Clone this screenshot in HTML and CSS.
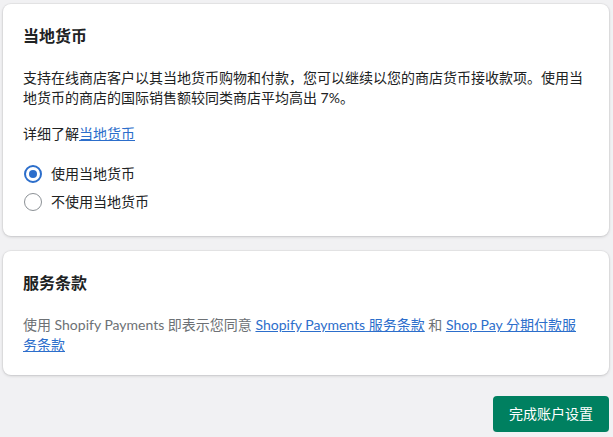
FILE: index.html
```html
<!DOCTYPE html>
<html lang="zh-CN">
  <head>
    <meta charset="UTF-8" />
    <meta name="viewport" content="width=device-width, initial-scale=1.0" />
    <title>账户设置</title>
    <link rel="stylesheet" href="styles.css">
  </head>
  <body>
    <main class="page">
      <section class="card">
        <h2 class="card-title">当地货币</h2>
        <p class="text">支持在线商店客户以其当地货币购物和付款，您可以继续以您的商店货币接收款项。使用当地货币的商店的国际销售额较同类商店平均高出 7%。</p>
        <p class="text more">详细了解<a href="#">当地货币</a></p>
        <div class="choices">
          <label class="choice">
            <input type="radio" name="currency" checked>
            <span class="radio"></span>
            <span>使用当地货币</span>
          </label>
          <label class="choice">
            <input type="radio" name="currency">
            <span class="radio"></span>
            <span>不使用当地货币</span>
          </label>
        </div>
      </section>

      <section class="card">
        <h2 class="card-title">服务条款</h2>
        <p class="text subdued">使用 Shopify Payments 即表示您同意 <a href="#">Shopify Payments 服务条款</a> 和 <a href="#">Shop Pay 分期付款服务条款</a></p>
      </section>

      <div class="actions">
        <button class="primary-btn">完成账户设置</button>
      </div>
    </main>
  </body>
</html>
```

FILE: styles.css
```css
* {
  margin: 0;
  padding: 0;
  box-sizing: border-box;
}

body {
  background: #f1f1f3;
  font-family: "Lato", "Noto Sans CJK SC", sans-serif;
  font-size: 14px;
  line-height: 20px;
  color: #202223;
}

.page {
  padding: 4px 4px 0 3px;
  display: flex;
  flex-direction: column;
  gap: 15px;
}

.card {
  background: #fff;
  border-radius: 8px;
  padding: 20px;
  box-shadow: 0 0 0 1px rgba(63, 63, 68, 0.05), 0 1px 3px rgba(63, 63, 68, 0.2);
}

.card-title {
  font-size: 16px;
  line-height: 24px;
  font-weight: 600;
  margin-bottom: 20px;
}

.text a {
  color: #2c6ecb;
  text-decoration: underline;
}

.more {
  margin-top: 16px;
}

.subdued {
  color: #6d7175;
}

.choices {
  margin-top: 16px;
  display: flex;
  flex-direction: column;
}

.choice {
  display: flex;
  align-items: center;
  gap: 9px;
  min-height: 28px;
  padding-left: 1px;
  cursor: pointer;
}

.choice input {
  display: none;
}

.radio {
  width: 18px;
  height: 18px;
  border-radius: 50%;
  border: 1.5px solid #8c9196;
  display: flex;
  justify-content: center;
  align-items: center;
}

.choice input:checked + .radio {
  border: 2px solid #2c6ecb;
}

.choice input:checked + .radio::after {
  content: "";
  width: 8px;
  height: 8px;
  border-radius: 50%;
  background: #2c6ecb;
}

.actions {
  display: flex;
  justify-content: flex-end;
  margin-top: 6px;
}

.primary-btn {
  background: #008060;
  color: #fff;
  border: none;
  border-radius: 4px;
  font-family: inherit;
  font-size: 14px;
  line-height: 20px;
  padding: 8px 16px;
  box-shadow: 0 1px 0 rgba(0, 0, 0, 0.08);
}
```
